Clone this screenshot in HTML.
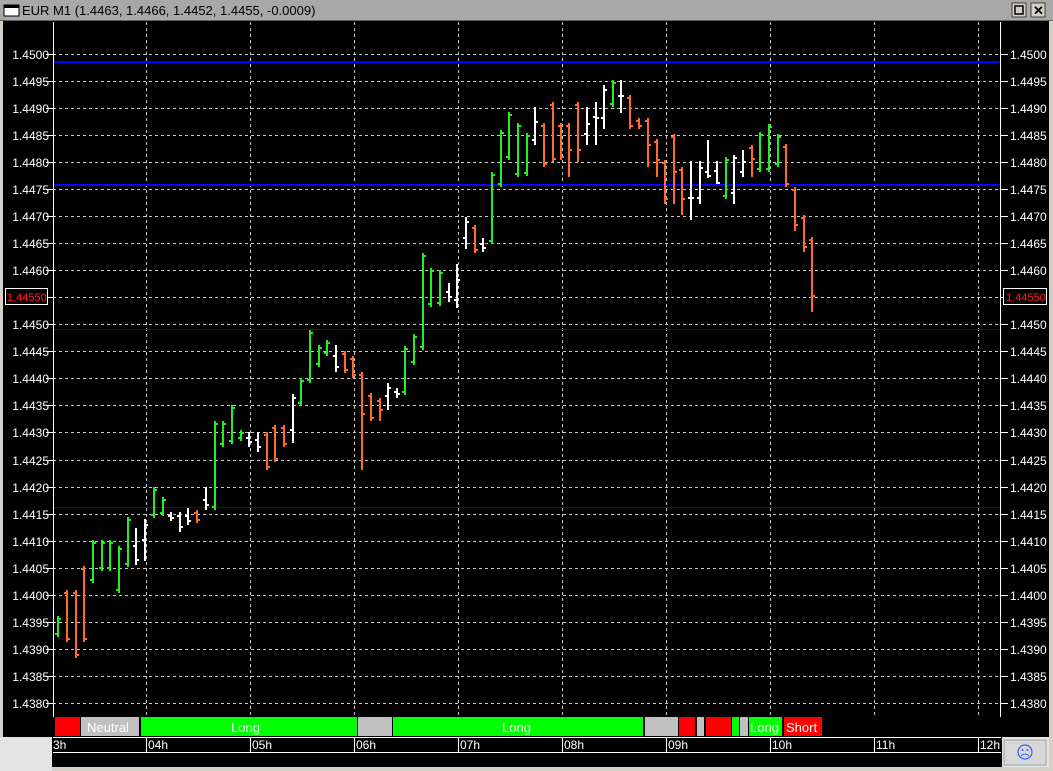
<!DOCTYPE html>
<html><head><meta charset="utf-8"><style>
body{margin:0;width:1053px;height:771px;overflow:hidden;background:#d4d0c8;font-family:"Liberation Sans",sans-serif}
</style></head><body>
<svg width="1053" height="771" xmlns="http://www.w3.org/2000/svg" style="position:absolute;left:0;top:0">
<rect x="0" y="0" width="1053" height="771" fill="#d4d0c8"/>
<rect x="0" y="0" width="1053" height="20" fill="#a8a8a8"/>
<line x1="0" y1="20.5" x2="1053" y2="20.5" stroke="#606060"/>
<rect x="4" y="5" width="15" height="11" fill="#fff" stroke="#000"/>
<rect x="4" y="5" width="15" height="3" fill="#000"/>
<text x="22" y="15" font-size="13" fill="#000">EUR M1 (1.4463, 1.4466, 1.4452, 1.4455, -0.0009)</text>
<rect x="1012" y="3" width="14" height="14" fill="#d4d0c8" stroke="#404040"/>
<rect x="1015" y="6" width="8" height="8" fill="none" stroke="#000" stroke-width="1.5"/>
<rect x="1031" y="3" width="14" height="14" fill="#d4d0c8" stroke="#404040"/>
<text x="1033" y="15" font-size="13" font-weight="bold" fill="#000">✕</text>
<rect x="3" y="21" width="1047" height="716" fill="#000"/>
<rect x="0" y="737" width="52" height="34" fill="#e4e4e4"/>
<rect x="52" y="737" width="950" height="30" fill="#000"/>
<rect x="1002" y="737" width="48" height="30" fill="#e4e4e4"/>
<rect x="1004" y="740" width="42" height="25" fill="#d8d8d8" stroke="#a0a0a0"/>
<circle cx="1025" cy="752" r="7" fill="none" stroke="#3060ff" stroke-width="1.2"/>
<circle cx="1022.5" cy="750" r="1" fill="#3060ff"/><circle cx="1027.5" cy="750" r="1" fill="#3060ff"/>
<path d="M1021 756q4-4 8 0" fill="none" stroke="#3060ff"/>
<g stroke="#c8c8c8" stroke-dasharray="3,3" stroke-width="1">
<path d="M146.5 22V717M250.5 22V717M354.5 22V717M458.5 22V717M562.5 22V717M666.5 22V717M770.5 22V717M874.5 22V717M978.5 22V717"/>
<path d="M53 54.5H1001M53 81.5H1001M53 108.5H1001M53 135.5H1001M53 162.5H1001M53 189.5H1001M53 216.5H1001M53 243.5H1001M53 270.5H1001M53 297.5H1001M53 324.5H1001M53 351.5H1001M53 378.5H1001M53 405.5H1001M53 432.5H1001M53 460.5H1001M53 487.5H1001M53 514.5H1001M53 541.5H1001M53 568.5H1001M53 595.5H1001M53 622.5H1001M53 649.5H1001M53 676.5H1001M53 703.5H1001"/>
</g>
<g stroke="#0000ff" stroke-width="2"><path d="M53 62H1001M53 185H1001"/></g>
<g stroke="#0000ff" stroke-width="1"><path d="M53 329.5H1001M53 507.5H1001"/></g>
<g stroke="#fff" stroke-width="1">
<path d="M53.5 22V717M1000.5 22V717"/>
<path d="M46 54.5H53M46 81.5H53M46 108.5H53M46 135.5H53M46 162.5H53M46 189.5H53M46 216.5H53M46 243.5H53M46 270.5H53M46 297.5H53M46 324.5H53M46 351.5H53M46 378.5H53M46 405.5H53M46 432.5H53M46 460.5H53M46 487.5H53M46 514.5H53M46 541.5H53M46 568.5H53M46 595.5H53M46 622.5H53M46 649.5H53M46 676.5H53M46 703.5H53"/>
<path d="M1001 54.5H1008M1001 81.5H1008M1001 108.5H1008M1001 135.5H1008M1001 162.5H1008M1001 189.5H1008M1001 216.5H1008M1001 243.5H1008M1001 270.5H1008M1001 297.5H1008M1001 324.5H1008M1001 351.5H1008M1001 378.5H1008M1001 405.5H1008M1001 432.5H1008M1001 460.5H1008M1001 487.5H1008M1001 514.5H1008M1001 541.5H1008M1001 568.5H1008M1001 595.5H1008M1001 622.5H1008M1001 649.5H1008M1001 676.5H1008M1001 703.5H1008"/>
</g>
<g fill="#fff" font-size="12" text-anchor="end">
<text x="49" y="59">1.4500</text><text x="49" y="113">1.4490</text><text x="49" y="86">1.4495</text><text x="49" y="140">1.4485</text><text x="49" y="167">1.4480</text><text x="49" y="194">1.4475</text><text x="49" y="221">1.4470</text><text x="49" y="248">1.4465</text><text x="49" y="275">1.4460</text><text x="49" y="329">1.4450</text><text x="49" y="356">1.4445</text><text x="49" y="383">1.4440</text><text x="49" y="410">1.4435</text><text x="49" y="437">1.4430</text><text x="49" y="465">1.4425</text><text x="49" y="492">1.4420</text><text x="49" y="519">1.4415</text><text x="49" y="546">1.4410</text><text x="49" y="573">1.4405</text><text x="49" y="600">1.4400</text><text x="49" y="627">1.4395</text><text x="49" y="654">1.4390</text><text x="49" y="681">1.4385</text><text x="49" y="708">1.4380</text>
</g>
<g fill="#fff" font-size="12">
<text x="1010" y="59">1.4500</text><text x="1010" y="86">1.4495</text><text x="1010" y="113">1.4490</text><text x="1010" y="140">1.4485</text><text x="1010" y="167">1.4480</text><text x="1010" y="194">1.4475</text><text x="1010" y="221">1.4470</text><text x="1010" y="248">1.4465</text><text x="1010" y="275">1.4460</text><text x="1010" y="329">1.4450</text><text x="1010" y="356">1.4445</text><text x="1010" y="383">1.4440</text><text x="1010" y="410">1.4435</text><text x="1010" y="437">1.4430</text><text x="1010" y="465">1.4425</text><text x="1010" y="492">1.4420</text><text x="1010" y="519">1.4415</text><text x="1010" y="546">1.4410</text><text x="1010" y="573">1.4405</text><text x="1010" y="600">1.4400</text><text x="1010" y="627">1.4395</text><text x="1010" y="654">1.4390</text><text x="1010" y="681">1.4385</text><text x="1010" y="708">1.4380</text>
</g>
<rect x="5.5" y="288.5" width="42" height="16" fill="#000" stroke="#fff"/>
<text x="7" y="301" font-size="11" fill="#ff2020">1.44550</text>
<rect x="1003.5" y="288.5" width="43" height="16" fill="#000" stroke="#fff"/>
<text x="1006" y="301" font-size="11" fill="#ff2020">1.44550</text>
<g fill="none" stroke-width="2">
<path stroke="#22ee22" d="M58 616V637M55 634h3M58 619h3M93 540V583M90 580h3M93 543h3M102 540V571M99 568h3M102 543h3M110 540V571M107 568h3M110 543h3M119 546V593M116 590h3M119 549h3M128 517V567M125 564h3M128 520h3M154 487V518M151 515h3M154 490h3M163 497V516M160 513h3M163 500h3M215 421V510M212 507h3M215 424h3M223 421V447M220 444h3M223 424h3M232 405V444M229 441h3M232 408h3M241 430V441M238 438h3M241 433h3M301 378V406M298 403h3M301 381h3M310 330V383M307 380h3M310 333h3M319 345V367M316 364h3M319 348h3M327 340V356M324 353h3M327 343h3M405 346V395M402 392h3M405 349h3M414 334V365M411 362h3M414 337h3M423 253V350M420 347h3M423 256h3M431 268V307M428 304h3M431 271h3M440 270V306M437 303h3M440 273h3M492 172V244M489 241h3M492 175h3M501 130V187M498 184h3M501 133h3M509 112V160M506 157h3M509 115h3M518 123V177M515 174h3M518 126h3M527 133V176M524 173h3M527 136h3M613 80V107M610 104h3M613 83h3M726 157V199M723 196h3M726 160h3M760 132V172M757 169h3M760 135h3M769 124V172M766 169h3M769 127h3M778 134V167M775 164h3M778 137h3"/>
<path stroke="#ff6a2a" d="M67 590V642M64 593h3M67 639h3M76 590V658M73 593h3M76 655h3M84 566V642M81 569h3M84 639h3M197 510V523M194 513h3M197 520h3M267 432V470M264 435h3M267 467h3M275 425V462M272 428h3M275 459h3M284 425V447M281 428h3M284 444h3M345 351V373M342 354h3M345 370h3M353 356V378M350 359h3M353 375h3M362 372V470M359 375h3M362 414h3M371 393V421M368 396h3M371 418h3M380 398V421M377 401h3M380 410h3M475 225V253M472 228h3M475 250h3M544 123V167M541 126h3M544 164h3M553 102V162M550 105h3M553 159h3M561 123V160M558 126h3M561 157h3M569 123V177M566 126h3M569 150h3M578 102V162M575 105h3M578 150h3M630 95V129M627 98h3M630 126h3M639 118V129M636 121h3M639 126h3M648 118V167M645 121h3M648 145h3M657 139V177M654 142h3M657 160h3M665 160V204M662 163h3M665 199h3M674 134V204M671 137h3M674 172h3M682 167V215M679 170h3M682 199h3M752 145V177M749 148h3M752 159h3M786 144V187M783 147h3M786 184h3M795 187V231M792 190h3M795 225h3M804 215V252M801 218h3M804 247h3M812 237V312M809 240h3M812 296h3"/>
<path stroke="#ffffff" d="M136 528V565M133 546h3M136 560h3M145 519V561M142 540h3M145 525h3M171 512V521M168 516h3M171 518h3M180 512V532M177 516h3M180 527h3M188 508V525M185 516h3M188 521h3M206 487V510M203 500h3M206 505h3M249 432V447M246 438h3M249 442h3M258 432V452M255 440h3M258 447h3M293 394V443M290 430h3M293 398h3M336 345V372M333 356h3M336 367h3M388 383V410M385 396h3M388 388h3M397 388V398M394 392h3M397 394h3M449 283V302M446 292h3M449 297h3M457 264V308M454 300h3M457 280h3M466 217V249M463 238h3M466 222h3M483 238V252M480 244h3M483 248h3M535 107V145M532 140h3M535 122h3M587 107V145M584 134h3M587 124h3M596 102V145M593 117h3M596 118h3M604 85V129M601 118h3M604 90h3M621 80V113M618 96h3M621 96h3M691 161V220M688 198h3M691 198h3M700 161V204M697 198h3M700 168h3M708 140V178M705 172h3M708 176h3M717 161V184M714 171h3M717 183h3M734 155V204M731 193h3M734 158h3M743 150V177M740 172h3M743 162h3"/>
</g>
<rect x="55" y="717" width="25" height="19" fill="#ff0000"/>
<rect x="81" y="717" width="58" height="19" fill="#c0c0c0"/>
<rect x="141" y="717" width="216" height="19" fill="#00ff00"/>
<rect x="358" y="717" width="34" height="19" fill="#c0c0c0"/>
<rect x="393" y="717" width="250" height="19" fill="#00ff00"/>
<rect x="645" y="717" width="33" height="19" fill="#c0c0c0"/>
<rect x="679" y="717" width="16" height="19" fill="#ff0000"/>
<rect x="697" y="717" width="7" height="19" fill="#c0c0c0"/>
<rect x="706" y="717" width="25" height="19" fill="#ff0000"/>
<rect x="732" y="717" width="7" height="19" fill="#00ff00"/>
<rect x="740" y="717" width="8" height="19" fill="#c0c0c0"/>
<rect x="749" y="717" width="33" height="19" fill="#00ff00"/>
<rect x="784" y="717" width="38" height="19" fill="#ff0000"/>
<g fill="#fff" font-size="13">
<text x="87" y="732">Neutral</text><text x="231" y="732">Long</text><text x="502" y="732">Long</text><text x="750" y="732">Long</text><text x="786" y="732">Short</text>
</g>
<g stroke="#fff" fill="none">
<path d="M53 737.5H1001M53 752.5H1001M146.5 737V752M250.5 737V752M354.5 737V752M458.5 737V752M562.5 737V752M666.5 737V752M770.5 737V752M874.5 737V752M978.5 737V752"/>
</g>
<g fill="#fff" font-size="12">
<text x="53" y="749">3h</text><text x="148" y="749">04h</text><text x="252" y="749">05h</text><text x="356" y="749">06h</text><text x="460" y="749">07h</text><text x="564" y="749">08h</text><text x="668" y="749">09h</text><text x="772" y="749">10h</text><text x="876" y="749">11h</text><text x="980" y="749">12h</text>
</g>
<rect x="1049" y="21" width="4" height="750" fill="#d4d0c8"/>
</svg>
</body></html>
